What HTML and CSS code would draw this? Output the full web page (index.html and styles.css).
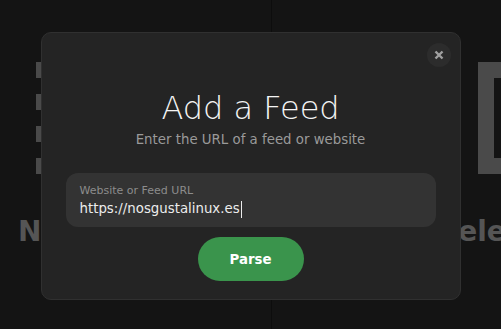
FILE: index.html
```html
<!DOCTYPE html>
<html lang="en">
<head>
<meta charset="utf-8">
<title>Add a Feed</title>
<link rel="stylesheet" href="styles.css">
</head>
<body>
<div class="app">
  <section class="pane pane-left">
    <svg class="list-icon" width="120" height="112" viewBox="0 0 120 112">
      <rect x="0" y="0" width="6" height="16"/>
      <rect x="0" y="32" width="6" height="16"/>
      <rect x="0" y="64" width="6" height="16"/>
      <rect x="0" y="96" width="6" height="16"/>
      <rect x="20" y="0" width="100" height="16"/>
      <rect x="20" y="32" width="100" height="16"/>
      <rect x="20" y="64" width="100" height="16"/>
      <rect x="20" y="96" width="100" height="16"/>
    </svg>
    <div class="empty-text">No Feeds</div>
  </section>
  <section class="pane pane-right">
    <svg class="doc-icon" width="100" height="112" viewBox="0 0 100 112">
      <path d="M0 0H100V112H0Z M16 16V96H84V16Z" fill-rule="evenodd"/>
    </svg>
    <div class="empty-text">Select</div>
  </section>
</div>

<div class="overlay">
  <div class="modal">
    <button class="close" aria-label="Close">
      <svg width="10" height="10" viewBox="0 0 10 10"><path d="M1.5 1.5L8.5 8.5M8.5 1.5L1.5 8.5"/></svg>
    </button>
    <h1 class="title">Add a Feed</h1>
    <p class="subtitle">Enter the URL of a feed or website</p>
    <div class="field">
      <div class="field-label">Website or Feed URL</div>
      <div class="field-value">https://nosgustalinux.es<span class="caret"></span></div>
    </div>
    <button class="parse">Parse</button>
  </div>
</div>
</body>
</html>
```

FILE: styles.css
```css
html, body {
  margin: 0;
  padding: 0;
  height: 100%;
  background: #141414;
  font-family: "DejaVu Sans", "Liberation Sans", sans-serif;
  overflow: hidden;
}

.app {
  display: flex;
  height: 100vh;
}

.pane {
  display: flex;
  flex-direction: column;
  align-items: flex-start;
  overflow: hidden;
  white-space: nowrap;
  padding-top: 62px;
  box-sizing: border-box;
}

.pane-left {
  width: 272px;
  flex: none;
  padding-left: 18px;
  border-right: 1px solid #0d0d0d;
}

.pane-right {
  flex: 1;
  padding-left: 166px;
}

.list-icon {
  fill: #4a4a4a;
  margin-left: 18px;
  flex: none;
}

.doc-icon {
  fill: #4a4a4a;
  margin-left: 40px;
  flex: none;
}

.empty-text {
  margin-top: 41px;
  font-size: 28px;
  font-weight: bold;
  line-height: 34px;
  color: #555555;
}

.overlay {
  position: fixed;
  inset: 0;
  display: flex;
  align-items: center;
  justify-content: center;
  padding-top: 3px;
  box-sizing: border-box;
}

.modal {
  position: relative;
  width: 420px;
  box-sizing: border-box;
  background: #242424;
  border: 1px solid #303030;
  border-radius: 10px;
  padding: 56px 24px 18px;
  display: flex;
  flex-direction: column;
  align-items: center;
}

.close {
  position: absolute;
  top: 10px;
  right: 9px;
  width: 24px;
  height: 24px;
  border-radius: 50%;
  border: none;
  padding: 0;
  background: #2c2c2c;
  display: flex;
  align-items: center;
  justify-content: center;
}

.close svg path {
  stroke: #a0a0a0;
  stroke-width: 2.4;
  fill: none;
}

.title {
  margin: 0;
  font-size: 32px;
  font-weight: 200;
  line-height: 38px;
  color: #f4f4f4;
}

.subtitle {
  margin: 5px 0 0;
  font-size: 13.33px;
  line-height: 16px;
  color: #9a9a9a;
}

.field {
  margin-top: 25px;
  align-self: stretch;
  background: #333333;
  border-radius: 12px;
  padding: 11px 14px 9px;
}

.field-label {
  font-size: 11px;
  line-height: 13px;
  color: #8c8c8c;
}

.field-value {
  margin-top: 3px;
  font-size: 13.33px;
  line-height: 18px;
  color: #ececec;
  display: flex;
  align-items: center;
}

.caret {
  display: inline-block;
  width: 1px;
  height: 17px;
  background: #ececec;
  margin-left: 1px;
}

.parse {
  margin-top: 10px;
  width: 106px;
  height: 44px;
  border: none;
  border-radius: 22px;
  background: #3a944c;
  color: #ffffff;
  font-family: "DejaVu Sans", sans-serif;
  font-size: 13.33px;
  font-weight: bold;
}
```
